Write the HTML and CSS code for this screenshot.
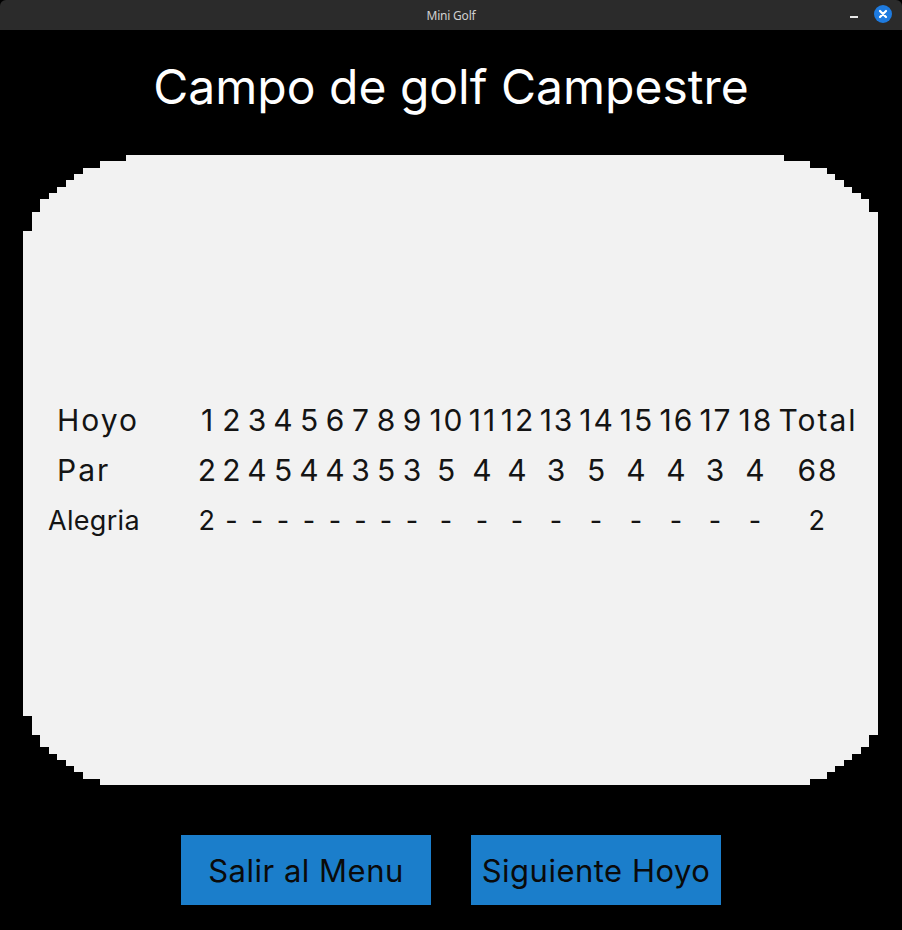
FILE: index.html
```html
<!DOCTYPE html>
<html lang="es">
<head>
<meta charset="utf-8">
<title>Mini Golf</title>
<link rel="stylesheet" href="styles.css">
</head>
<body>
<div class="window">
  <div class="titlebar">
    <span class="titlebar-title">Mini Golf</span>
    <div class="titlebar-controls">
      <span class="minimize"></span>
      <svg class="close" width="18" height="18" viewBox="0 0 18 18">
        <circle cx="9" cy="9" r="9" fill="#1e7be0"/>
        <path d="M6 6 L12 12 M12 6 L6 12" stroke="#fff" stroke-width="2.2" stroke-linecap="round"/>
      </svg>
    </div>
  </div>
  <main class="content">
    <h1 class="title">Campo de golf Campestre</h1>
    <section class="card">
      <div class="scores">
        <div class="label big indent">Hoyo</div>
        <div class="cell big">1</div><div class="cell big">2</div><div class="cell big">3</div><div class="cell big">4</div><div class="cell big">5</div><div class="cell big">6</div><div class="cell big">7</div><div class="cell big">8</div><div class="cell big">9</div><div class="cell big">10</div><div class="cell big">11</div><div class="cell big">12</div><div class="cell big">13</div><div class="cell big">14</div><div class="cell big">15</div><div class="cell big">16</div><div class="cell big">17</div><div class="cell big">18</div><div class="cell big">Total</div>

        <div class="label big indent">Par</div>
        <div class="cell big">2</div><div class="cell big">2</div><div class="cell big">4</div><div class="cell big">5</div><div class="cell big">4</div><div class="cell big">4</div><div class="cell big">3</div><div class="cell big">5</div><div class="cell big">3</div><div class="cell big">5</div><div class="cell big">4</div><div class="cell big">4</div><div class="cell big">3</div><div class="cell big">5</div><div class="cell big">4</div><div class="cell big">4</div><div class="cell big">3</div><div class="cell big">4</div><div class="cell big">68</div>

        <div class="label small">Alegria</div>
        <div class="cell small">2</div><div class="cell small">-</div><div class="cell small">-</div><div class="cell small">-</div><div class="cell small">-</div><div class="cell small">-</div><div class="cell small">-</div><div class="cell small">-</div><div class="cell small">-</div><div class="cell small">-</div><div class="cell small">-</div><div class="cell small">-</div><div class="cell small">-</div><div class="cell small">-</div><div class="cell small">-</div><div class="cell small">-</div><div class="cell small">-</div><div class="cell small">-</div><div class="cell small">2</div>
      </div>
    </section>
    <div class="actions">
      <button class="btn">Salir al Menu</button>
      <button class="btn">Siguiente Hoyo</button>
    </div>
  </main>
</div>
</body>
</html>
```
FILE: styles.css
```css
* { box-sizing: border-box; }
html, body {
  margin: 0;
  padding: 0;
  background: #000;
}
body {
  width: 902px;
  height: 930px;
  overflow: hidden;
  font-family: Inter, "Noto Sans", sans-serif;
}
.window {
  width: 902px;
  height: 930px;
  display: flex;
  flex-direction: column;
  background: #000;
}
.titlebar {
  height: 30px;
  flex: 0 0 30px;
  background: #2b2b2b;
  position: relative;
  display: flex;
  align-items: center;
  justify-content: center;
  border-radius: 6px 6px 0 0;
}
.titlebar-title {
  font-family: "Noto Sans", "Open Sans", sans-serif;
  font-size: 12px;
  color: #d0d0d0;
  letter-spacing: -0.2px;
}
.titlebar-controls {
  position: absolute;
  right: 10px;
  top: 5px;
  display: flex;
  align-items: center;
  gap: 16px;
}
.minimize {
  display: block;
  width: 8px;
  height: 2px;
  background: #e8e8e8;
  margin-top: 6px;
}
.close { display: block; }

.content {
  flex: 1;
  display: flex;
  flex-direction: column;
  align-items: center;
}
.title {
  margin: 0;
  padding-top: 27px;
  height: 125px;
  font-weight: 400;
  font-size: 48px;
  line-height: 60px;
  color: #fff;
  text-align: center;
}
.card {
  align-self: flex-start;
  margin-left: 23px;
  width: 855px;
  height: 630px;
  background: #f2f2f2;
  display: flex;
  align-items: center;
  justify-content: flex-start;
  padding-left: 25px;
  clip-path: polygon(
    103px 0, 761px 0, 761px 6px, 787px 6px, 787px 13px, 804px 13px, 804px 19px, 812px 19px, 812px 25px, 821px 25px, 821px 32px, 829px 32px, 829px 38px, 838px 38px, 838px 44px, 846px 44px, 846px 57px, 855px 57px,
    855px 580px, 846px 580px, 846px 592px, 838px 592px, 838px 599px, 829px 599px, 829px 605px, 821px 605px, 821px 611px, 812px 611px, 812px 617px, 804px 617px, 804px 624px, 787px 624px, 787px 630px,
    77px 630px, 77px 624px, 60px 624px, 60px 617px, 51px 617px, 51px 611px, 43px 611px, 43px 605px, 34px 605px, 34px 599px, 26px 599px, 26px 592px, 17px 592px, 17px 580px, 9px 580px, 9px 561px, 0 561px,
    0 76px, 9px 76px, 9px 57px, 17px 57px, 17px 44px, 26px 44px, 26px 38px, 34px 38px, 34px 32px, 43px 32px, 43px 25px, 51px 25px, 51px 19px, 60px 19px, 60px 13px, 77px 13px, 77px 6px, 103px 6px
  );
}
.scores {
  display: grid;
  grid-template-columns: 147px 24px 25px 26px 26px 26px 26px 25px 26px 26px 42px 30px 40px 38px 42px 38px 42px 36px 44px 80px;
  grid-auto-rows: 50px;
  align-items: center;
  justify-items: center;
  color: #141414;
}
.big {
  font-size: 30px;
  letter-spacing: 2px;
}
.small {
  font-size: 27px;
  letter-spacing: 0.3px;
}
.cell {
  white-space: nowrap;
}
.cell.big { padding-left: 2px; }
.label {
  justify-self: start;
  white-space: nowrap;
}
.label.indent { padding-left: 9px; }

.actions {
  margin-top: 50px;
  display: flex;
  gap: 40px;
}
.btn {
  width: 250px;
  height: 70px;
  border: 0;
  border-radius: 0;
  background: #1b7ecb;
  color: #0a0a0a;
  font-family: Inter, "Noto Sans", sans-serif;
  font-size: 31px;
  letter-spacing: 0.5px;
  padding: 0;
}
```
